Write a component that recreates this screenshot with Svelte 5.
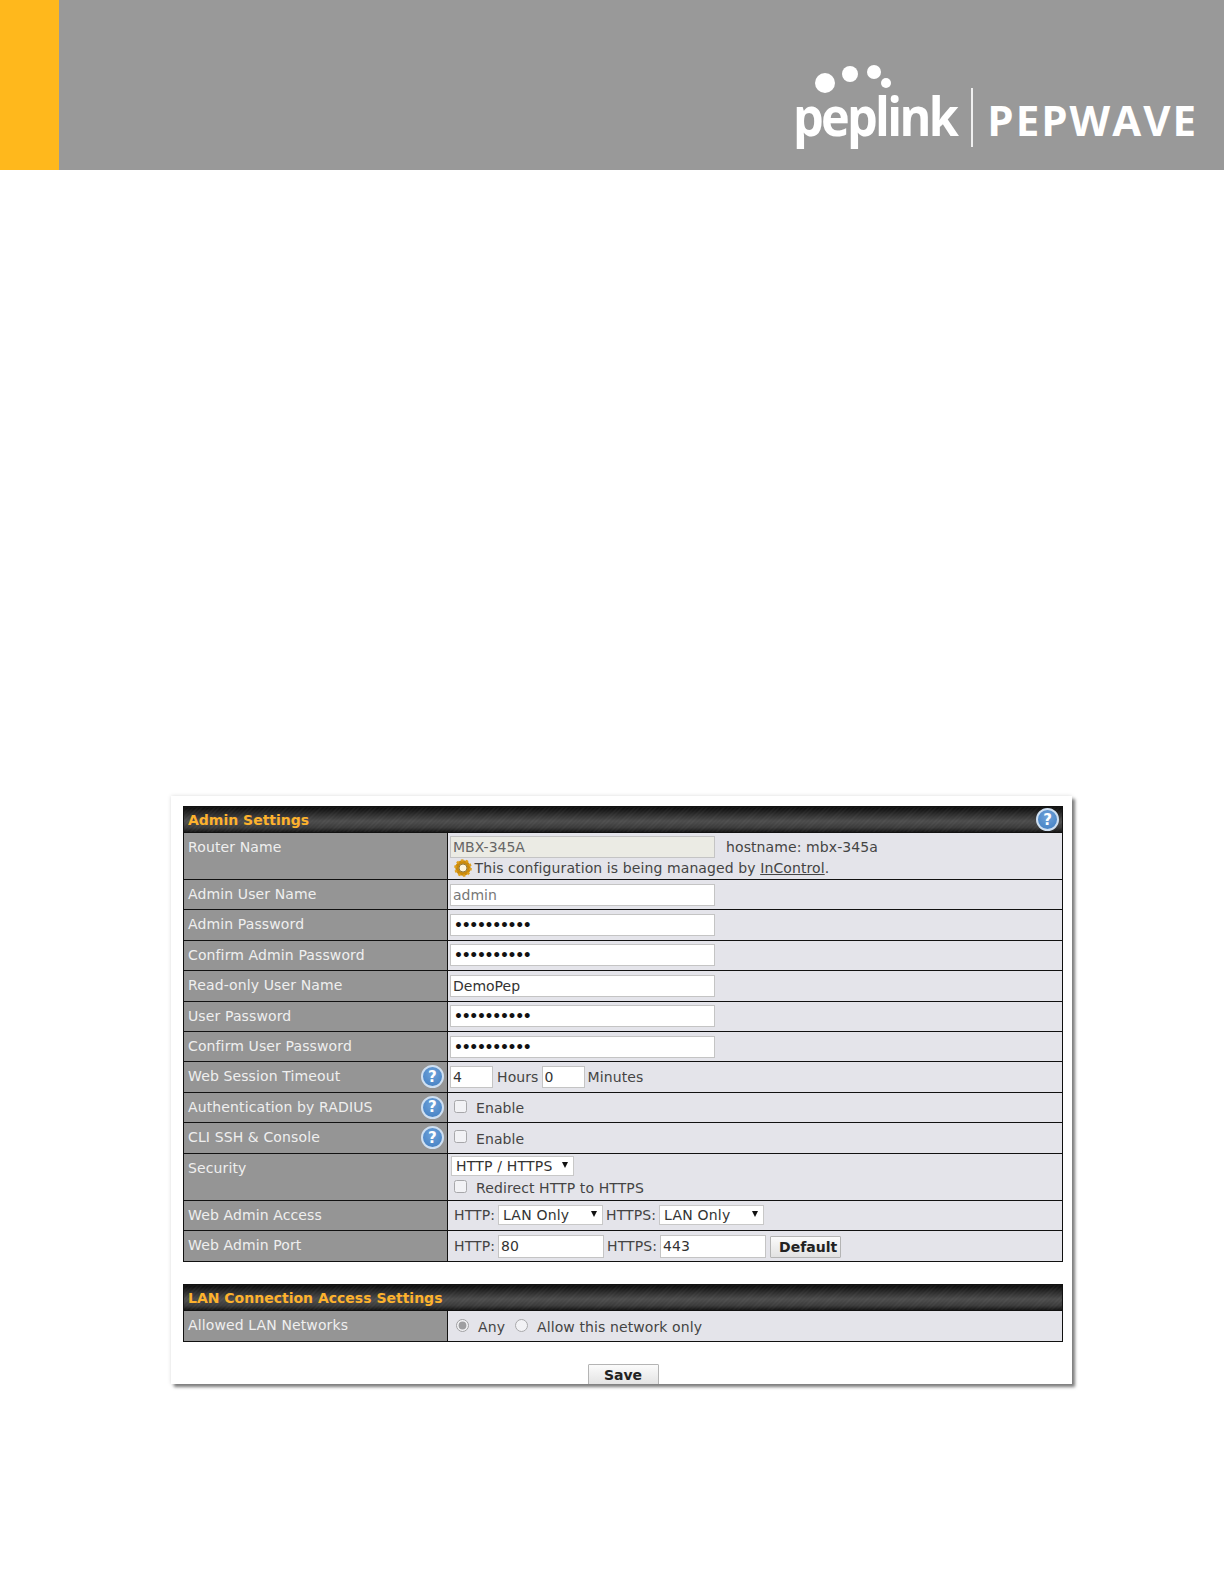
<script>
  const textRows = [
    { label: "Admin User Name", type: "text", value: "admin", muted: true },
    { label: "Admin Password", type: "password", value: "xxxxxxxxxx" },
    { label: "Confirm Admin Password", type: "password", value: "xxxxxxxxxx" },
    { label: "Read-only User Name", type: "text", value: "DemoPep" },
    { label: "User Password", type: "password", value: "xxxxxxxxxx" },
    { label: "Confirm User Password", type: "password", value: "xxxxxxxxxx" }
  ];
</script>

{#snippet help()}
  <span class="help"><span>?</span></span>
{/snippet}

<header class="banner">
  <div class="stripe"></div>
  <div class="logo">
    <div class="peplink">
      <svg class="dots" width="100" height="32" viewBox="0 0 100 32">
        <circle cx="27" cy="21" r="10" fill="#fff" />
        <circle cx="52" cy="12" r="8" fill="#fff" />
        <circle cx="76" cy="10" r="7" fill="#fff" />
        <circle cx="88" cy="21" r="5" fill="#fff" />
      </svg>
      <span class="wordmark">peplink</span>
    </div>
    <div class="rule"></div>
    <div class="pepwave">PEPWAVE</div>
  </div>
</header>

<div class="page">
  <main class="card">
    <table class="settings">
      <colgroup><col class="col-label" /><col /></colgroup>
      <thead>
        <tr class="head">
          <th colspan="2">
            <div class="head-row">Admin Settings {@render help()}</div>
          </th>
        </tr>
      </thead>
      <tbody>
        <tr class="tall">
          <td class="label">Router Name</td>
          <td class="value">
            <div class="line">
              <input class="field locked" value="MBX-345A" disabled />
              <span class="hostname">hostname: mbx-345a</span>
            </div>
            <div class="managed">
              <svg width="18" height="18" viewBox="0 0 18 18">
                <circle cx="9" cy="9" r="6" fill="none" stroke="#c98a0c" stroke-width="3.4" />
                <circle cx="9" cy="9" r="7.6" fill="none" stroke="#e0a01c" stroke-width="2.4" stroke-dasharray="2.4 2.4" />
                <circle cx="9" cy="9" r="4" fill="#fff6dc" stroke="#7a5a10" stroke-width="0.8" />
              </svg>
              This configuration is being managed by <a href="#incontrol">InControl</a>.
            </div>
          </td>
        </tr>
        {#each textRows as row}
          <tr>
            <td class="label">{row.label}</td>
            <td class="value">
              <input class="field" class:muted={row.muted} type={row.type} value={row.value} />
            </td>
          </tr>
        {/each}
        <tr>
          <td class="label"><div class="label-row">Web Session Timeout {@render help()}</div></td>
          <td class="value">
            <div class="line">
              <input class="field short" value="4" />
              <span class="hours">Hours</span>
              <input class="field short" value="0" />
              <span class="minutes">Minutes</span>
            </div>
          </td>
        </tr>
        <tr>
          <td class="label"><div class="label-row">Authentication by RADIUS {@render help()}</div></td>
          <td class="value"><label class="check"><input type="checkbox" />Enable</label></td>
        </tr>
        <tr>
          <td class="label"><div class="label-row">CLI SSH &amp; Console {@render help()}</div></td>
          <td class="value"><label class="check"><input type="checkbox" />Enable</label></td>
        </tr>
        <tr class="tall">
          <td class="label">Security</td>
          <td class="value security-cell">
            <span class="select security"><select><option>HTTP / HTTPS</option></select></span>
            <label class="check redirect"><input type="checkbox" />Redirect HTTP to HTTPS</label>
          </td>
        </tr>
        <tr>
          <td class="label">Web Admin Access</td>
          <td class="value">
            <div class="line inset">
              HTTP:
              <span class="select lan"><select><option>LAN Only</option></select></span>
              HTTPS:
              <span class="select lan"><select><option>LAN Only</option></select></span>
            </div>
          </td>
        </tr>
        <tr class="port-row">
          <td class="label">Web Admin Port</td>
          <td class="value">
            <div class="line inset">
              HTTP:
              <input class="field port" value="80" />
              HTTPS:
              <input class="field port" value="443" />
              <button class="btn default" type="button">Default</button>
            </div>
          </td>
        </tr>
      </tbody>
    </table>

    <table class="settings lan-table">
      <colgroup><col class="col-label" /><col /></colgroup>
      <thead>
        <tr class="head"><th colspan="2"><div class="head-row">LAN Connection Access Settings</div></th></tr>
      </thead>
      <tbody>
        <tr>
          <td class="label">Allowed LAN Networks</td>
          <td class="value">
            <div class="line radios">
              <label><input type="radio" name="lan" checked />Any</label>
              <label><input type="radio" name="lan" />Allow this network only</label>
            </div>
          </td>
        </tr>
      </tbody>
    </table>

    <div class="save"><button class="btn" type="button">Save</button></div>
  </main>
</div>

<style>
  :global(body) {
    margin: 0;
    background: #fff;
  }

  .banner {
    display: flex;
    justify-content: space-between;
    height: 170px;
    background: #999;
  }

  .stripe {
    width: 59px;
    background: #ffb81c;
  }

  .logo {
    display: flex;
    align-items: flex-start;
    padding: 84px 26px 0 0;
    color: #fff;
    font-family: "Open Sans", sans-serif;
    font-weight: 700;
  }

  .peplink {
    position: relative;
    font-size: 54px;
    letter-spacing: -3px;
    line-height: 62px;
  }

  .wordmark {
    display: inline-block;
    margin-right: -18px;
    transform: scaleX(0.9);
    transform-origin: left center;
  }

  .dots {
    position: absolute;
    left: 5px;
    top: -22px;
  }

  .rule {
    width: 2px;
    height: 59px;
    margin: 4px 14px 0 15px;
    background: #f0f0f0;
  }

  .pepwave {
    font-size: 42px;
    letter-spacing: 2px;
    line-height: 58px;
    margin-top: 7px;
  }

  .page {
    padding: 626px 0 200px 171px;
  }

  .card {
    box-sizing: border-box;
    width: 901px;
    height: 588px;
    padding: 10px 9px 0 12px;
    overflow: hidden;
    background: #fff;
    box-shadow: 3px 3px 3px #7c7c7c, 0 0 4px #ddd;
    font-family: "DejaVu Sans", sans-serif;
    font-size: 14px;
    color: #333;
  }

  .settings {
    width: 880px;
    table-layout: fixed;
    border-collapse: collapse;
  }

  .col-label {
    width: 264px;
  }

  .lan-table {
    margin-top: 22px;
  }

  tr {
    height: 30.4px;
  }

  tr.head {
    height: 26px;
  }

  tr.tall {
    height: 47px;
  }

  tr.port-row {
    height: 31.5px;
  }

  .head th {
    padding: 0 3px 0 4px;
    border: 1px solid #111;
    background:
      repeating-linear-gradient(135deg, rgba(255, 255, 255, 0.05) 0 1px, transparent 1px 3px),
      linear-gradient(#0c0c0c, #4c4c4c 55%, #3a3a3a 80%, #111);
    color: #fdb22d;
    font-size: 14px;
    font-weight: 700;
    text-align: left;
  }

  .head-row,
  .label-row {
    display: flex;
    align-items: center;
    justify-content: space-between;
    white-space: nowrap;
  }

  td {
    box-sizing: border-box;
    padding: 0;
    border: 1px solid #111;
  }

  .label {
    padding: 0 3px 0 4px;
    background: #959595;
    color: #efefef;
    vertical-align: top;
    line-height: 29px;
    letter-spacing: 0.12px;
  }

  .value {
    padding: 0 2px;
    background: #e4e4ea;
    color: #444;
    vertical-align: middle;
    letter-spacing: 0.1px;
  }

  .security-cell {
    padding-top: 2px;
    vertical-align: top;
  }

  .line {
    display: flex;
    align-items: center;
    white-space: nowrap;
  }

  .inset {
    gap: 3px;
    padding-left: 4px;
  }

  .field {
    box-sizing: border-box;
    display: block;
    width: 265px;
    height: 22px;
    padding: 0 2px;
    border: 1px solid #c4c4c4;
    background: #fff;
    color: #333;
    font: 14px "DejaVu Sans", sans-serif;
  }

  .field[type="password"] {
    padding-left: 3px;
    font-weight: 700;
    letter-spacing: -1.3px;
    color: #111;
  }

  .muted {
    color: #777;
  }

  .locked {
    background: #ebebe4;
    color: #666;
  }

  .hostname {
    margin-left: 11px;
  }

  .managed {
    margin: 1px 0 0 4px;
    height: 18px;
    line-height: 18px;
    white-space: nowrap;
  }

  .managed svg {
    margin-right: -2px;
    vertical-align: -4px;
  }

  .managed a {
    color: #444;
  }

  .short {
    width: 43px;
  }

  .hours {
    margin: 0 3px 0 4px;
  }

  .minutes {
    margin-left: 3px;
  }

  .port {
    width: 106px;
    height: 23px;
  }

  .check {
    display: flex;
    align-items: center;
    margin-left: 4px;
    margin-top: 2px;
    white-space: nowrap;
  }

  .check input,
  .radios input {
    width: 13px;
    height: 13px;
    margin: 0 9px 4px 0;
    opacity: 0.55;
    accent-color: #666;
  }

  .redirect {
    margin-top: 4px;
  }

  .select {
    position: relative;
    display: inline-block;
  }

  .select::after {
    content: "";
    position: absolute;
    top: 6px;
    right: 6px;
    border-top: 6px solid #111;
    border-left: 3px solid transparent;
    border-right: 3px solid transparent;
    pointer-events: none;
  }

  select {
    display: block;
    box-sizing: border-box;
    width: 105px;
    height: 20px;
    padding: 0 4px;
    border: 1px solid #c8c8c8;
    border-radius: 0;
    appearance: none;
    background: #fff;
    color: #333;
    font: 14px "DejaVu Sans", sans-serif;
    letter-spacing: 0.2px;
  }

  .security {
    margin-left: 1px;
  }

  .security select {
    width: 123px;
    height: 20px;
  }

  .btn {
    box-sizing: border-box;
    height: 22px;
    padding: 0 8px;
    border: 1px solid #b4b4b4;
    border-radius: 1px;
    background: linear-gradient(#fbfbfb, #e2e2e2);
    color: #222;
    font: 700 14px "DejaVu Sans", sans-serif;
  }

  .default {
    width: 71px;
    margin-top: 2px;
    margin-left: 1px;
  }

  .radios {
    gap: 10px;
    padding: 2px 0 0 6px;
  }

  .radios label {
    display: flex;
    align-items: center;
  }

  .save {
    display: flex;
    justify-content: center;
    margin-top: 22px;
  }

  .save .btn {
    width: 71px;
    height: 22px;
  }

  .help {
    display: flex;
    align-items: center;
    justify-content: center;
    flex: none;
    box-sizing: border-box;
    width: 23px;
    height: 23px;
    border: 2px solid #cfe0f2;
    border-radius: 50%;
    background: radial-gradient(circle at 50% 35%, #6fa3da, #3f7cc0);
    color: #fff;
    font: 700 15px "DejaVu Sans", sans-serif;
  }
</style>
